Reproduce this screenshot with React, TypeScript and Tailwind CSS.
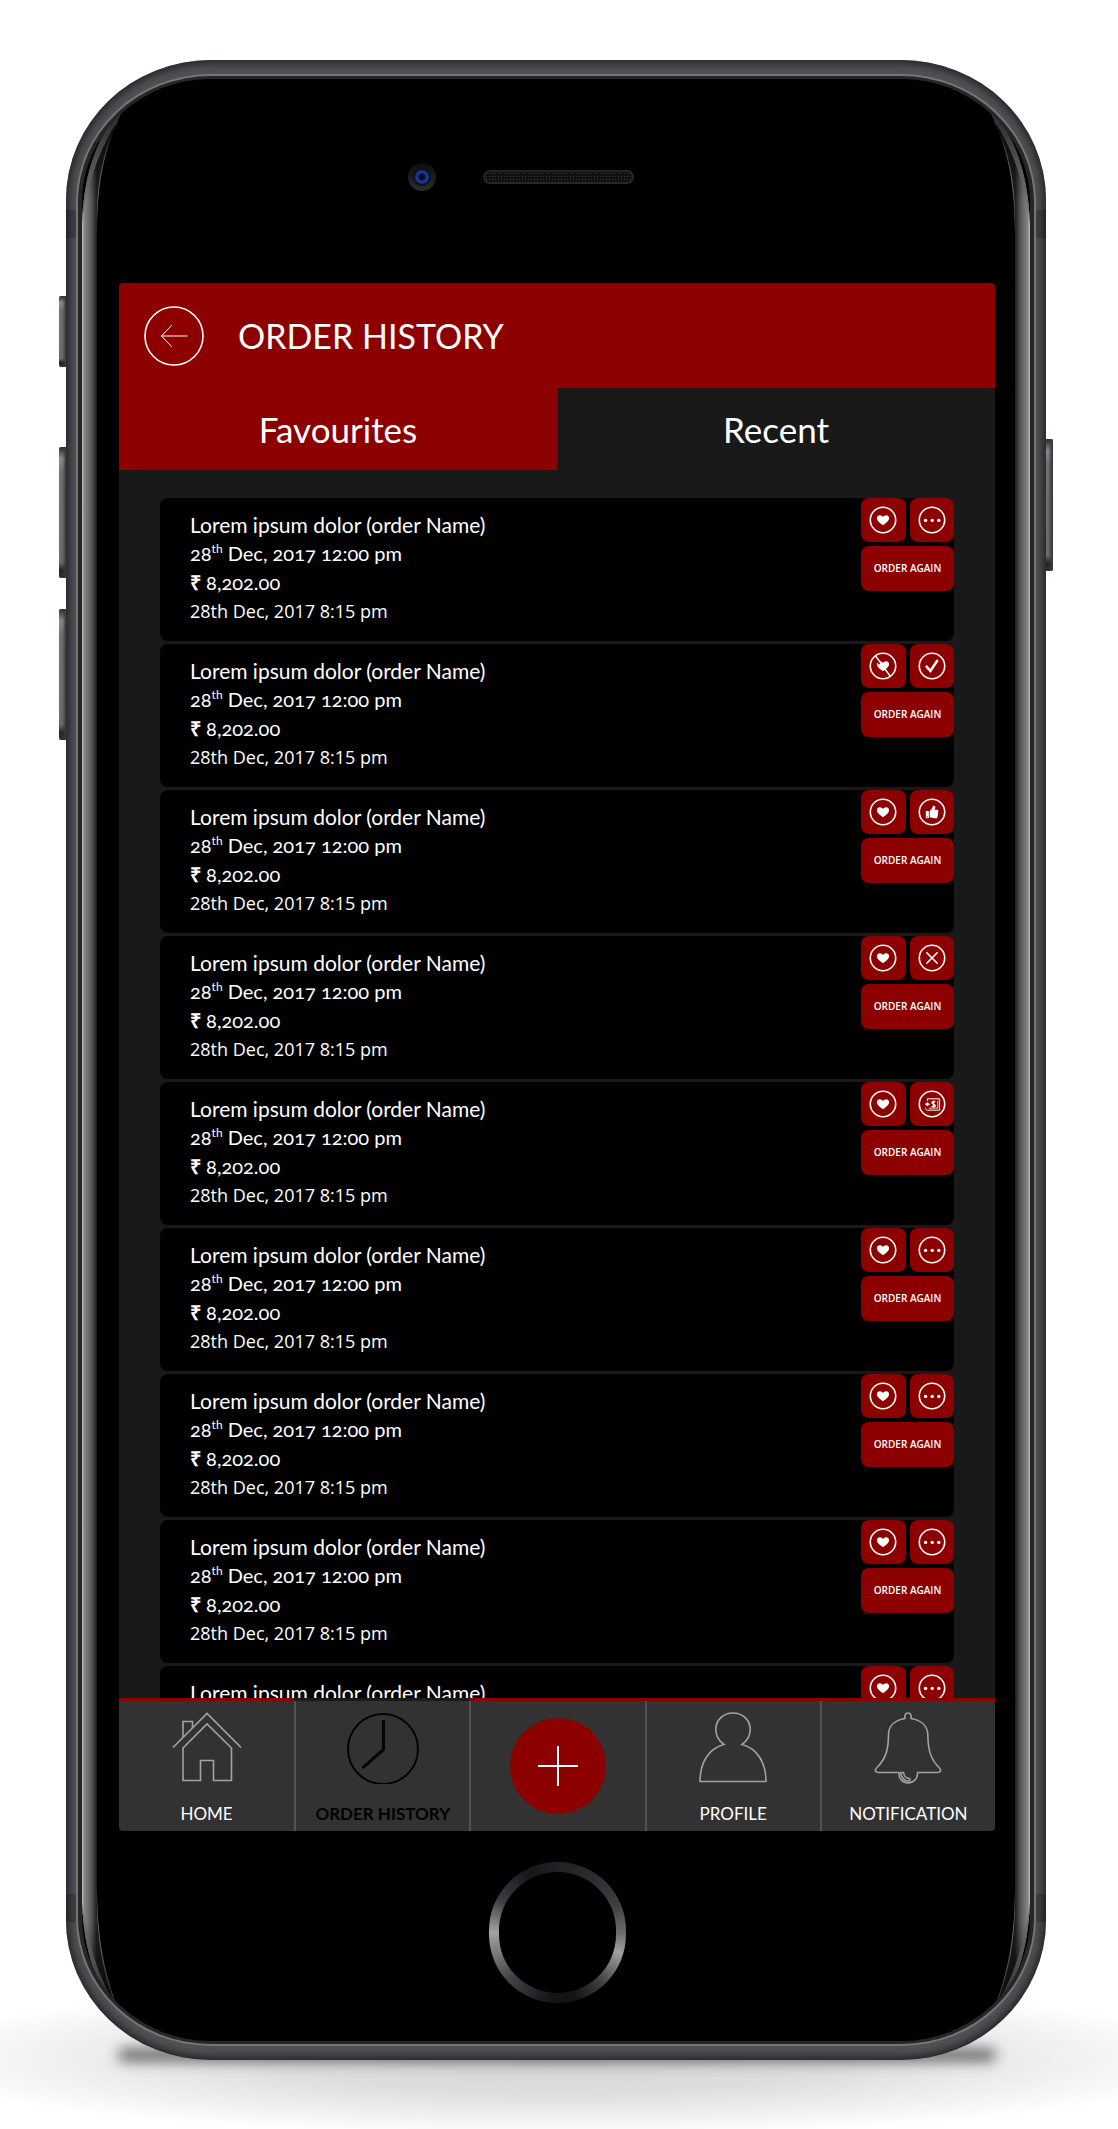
import type { ReactNode } from "react";
import { FaThumbsUp } from "react-icons/fa";

type Status = "more" | "done" | "liked" | "cancelled" | "paid";

type Order = { id: number; favourite: boolean; status: Status };

const orders: Order[] = [
  { id: 1, favourite: true, status: "more" },
  { id: 2, favourite: false, status: "done" },
  { id: 3, favourite: true, status: "liked" },
  { id: 4, favourite: true, status: "cancelled" },
  { id: 5, favourite: true, status: "paid" },
  { id: 6, favourite: true, status: "more" },
  { id: 7, favourite: true, status: "more" },
  { id: 8, favourite: true, status: "more" },
  { id: 9, favourite: true, status: "more" },
];

const statusLabels: Record<Status, string> = {
  more: "More options",
  done: "Delivered",
  liked: "Liked",
  cancelled: "Cancelled",
  paid: "Payment",
};

function RoundIcon({ children }: { children: ReactNode }) {
  return (
    <svg viewBox="0 0 28 28" className="size-7" fill="none" stroke="white" aria-hidden="true">
      <circle cx="14" cy="14" r="12.7" strokeWidth="1.6" />
      {children}
    </svg>
  );
}

function HeartIcon({ crossed }: { crossed: boolean }) {
  return (
    <RoundIcon>
      <path
        d="M14 19.2C11.5 17.2 7.9 15 7.9 12.2C7.9 10.3 9.3 9.3 10.8 9.3C12.2 9.3 13.3 10 14 11.1C14.7 10 15.8 9.3 17.2 9.3C18.7 9.3 20.1 10.3 20.1 12.2C20.1 15 16.5 17.2 14 19.2Z"
        fill="white"
        stroke="none"
      />
      {crossed && (
        <>
          <path d="M8 7.400L11 11.800M16 19.200L19 23.400" stroke="#8d0000" strokeWidth="3" />
          <path d="M6.4 3.6L21.2 24.2" strokeWidth="1.5" />
        </>
      )}
    </RoundIcon>
  );
}

function StatusIcon({ status }: { status: Status }) {
  if (status === "more") {
    return (
      <RoundIcon>
        <g fill="white" stroke="none">
          <circle cx="7.6" cy="14.4" r="1.7" />
          <circle cx="14.2" cy="14.4" r="1.7" />
          <circle cx="20.8" cy="14.4" r="1.7" />
        </g>
      </RoundIcon>
    );
  }
  if (status === "done") {
    return (
      <RoundIcon>
        <path d="M8.6 14.6L12.4 19L19.2 8.8" strokeWidth="2.5" strokeLinecap="round" />
      </RoundIcon>
    );
  }
  if (status === "liked") {
    return (
      <RoundIcon>
        <FaThumbsUp x="7.6" y="7.4" size={13} stroke="none" color="white" />
      </RoundIcon>
    );
  }
  if (status === "cancelled") {
    return (
      <RoundIcon>
        <path d="M8.8 8.8L19.2 19.2M19.2 8.8L8.8 19.2" strokeWidth="1.6" strokeLinecap="round" />
      </RoundIcon>
    );
  }
  return (
    <RoundIcon>
      <path d="M9.4 11V8.8H21.6V20.2H9.4C8.2 20.2 7.4 19 7.6 17.6" strokeWidth="1" />
      <path d="M10.8 18.2H20M19.8 10.6V18" strokeWidth="0.8" />
      <path d="M7.2 14.2L10 12.6V15.8ZM9.4 14.2H12" fill="white" strokeWidth="0.9" />
      <path
        d="M17.2 12.2C16.6 11.2 13.7 11.2 13.8 12.8C13.9 14.4 17.3 13.9 17.3 15.6C17.2 17.2 14.2 17.1 13.6 16M15.5 10.4V18"
        strokeWidth="1.3"
      />
    </RoundIcon>
  );
}

const actionClass =
  "flex h-11 items-center justify-center rounded-lg bg-[#8d0000] text-white";

function OrderCard({ order }: { order: Order }) {
  return (
    <li className="flex items-start justify-between rounded-lg bg-black">
      <div className="pt-3 pb-[15px] pl-[30px] text-xl leading-[29px] text-white oldstyle-nums">
        <h2 className="text-[21px] leading-[29px]">Lorem ipsum dolor (order Name)</h2>
        <p>
          28<sup className="top-[-8px] text-xs leading-none">th</sup> Dec, 2017 12:00 pm
        </p>
        <p>
          <span className="font-['Open_Sans'] font-bold">₹</span> 8,202.00
        </p>
        <p className="font-['Open_Sans',sans-serif] text-lg leading-[29px] lining-nums">
          28th Dec, 2017 8:15 pm
        </p>
      </div>
      <div className="grid w-[93px] grid-cols-2 gap-1">
        <button
          type="button"
          aria-label={order.favourite ? "Remove from favourites" : "Add to favourites"}
          className={actionClass}
        >
          <HeartIcon crossed={!order.favourite} />
        </button>
        <button type="button" aria-label={statusLabels[order.status]} className={actionClass}>
          <StatusIcon status={order.status} />
        </button>
        <button
          type="button"
          className="col-span-2 flex h-[45px] items-center justify-center rounded-lg bg-[#8d0000] font-['Open_Sans',sans-serif] text-[10px] font-semibold text-white"
        >
          ORDER AGAIN
        </button>
      </div>
    </li>
  );
}

function NavIcon({ children }: { children: ReactNode }) {
  return (
    <svg viewBox="0 0 72 72" className="size-[72px]" fill="none" aria-hidden="true">
      {children}
    </svg>
  );
}

function NavItem({ label, active = false, children }: { label: string; active?: boolean; children: ReactNode }) {
  return (
    <li
      className={
        active
          ? "min-w-0 flex-1 border-t-3 border-[#191919]"
          : "min-w-0 flex-1 border-t-3 border-[#8d0000]"
      }
    >
      <a
        href="#"
        aria-current={active ? "page" : undefined}
        className={
          active
            ? "flex flex-col items-center gap-[18px] border-l-2 border-[#505254] pt-[11px] pb-[5px] text-[17px] leading-6 font-bold whitespace-nowrap text-black"
            : "flex flex-col items-center gap-[18px] border-l-2 border-[#505254] pt-[11px] pb-[5px] text-[17px] leading-6 whitespace-nowrap text-white"
        }
      >
        {children}
        {label}
      </a>
    </li>
  );
}

function BottomNav() {
  return (
    <nav aria-label="Main">
      <ul className="flex overflow-hidden rounded-b bg-[#323232] [&>li:first-child>a]:border-l-0">
        <NavItem label="HOME">
          <NavIcon>
            <g stroke="#a3a3a3" strokeWidth="1.6">
              <path d="M2 35.5L36 1.5L70 35.5" />
              <path d="M12 25.5V9.5H21.5V16" />
              <path d="M12 36L36 12L60.5 36V68.5H42.5V48.5H29.5V68.5H12Z" />
            </g>
          </NavIcon>
        </NavItem>
        <NavItem label="ORDER HISTORY" active>
          <NavIcon>
            <circle cx="36" cy="37" r="35" stroke="black" strokeWidth="1.8" />
            <path d="M36.4 8V37.5L15.5 56" stroke="black" strokeWidth="3" />
          </NavIcon>
        </NavItem>
        <li className="min-w-0 flex-1 border-t-3 border-[#8d0000]">
          <div className="flex h-full items-center justify-center border-l-2 border-[#505254]">
            <button
              type="button"
              aria-label="New order"
              className="flex size-24 items-center justify-center rounded-full bg-[#8d0000]"
            >
              <svg viewBox="0 0 40 40" className="size-10" stroke="white" strokeWidth="2" aria-hidden="true">
                <path d="M20 0V40M0 20H40" />
              </svg>
            </button>
          </div>
        </li>
        <NavItem label="PROFILE">
          <NavIcon>
            <path
              d="M27 32.5C20 27.5 18.8 21 18.8 17.5C18.8 8 26.5 1 36 1C45.500 1 53.200 8 53.200 17.500C53.200 21 52 27.500 45 32.500C60 36.500 69 50 69 69.500H3C3 50 12 36.500 27 32.500Z"
              stroke="#a3a3a3"
              strokeWidth="1.6"
            />
          </NavIcon>
        </NavItem>
        <NavItem label="NOTIFICATION">
          <NavIcon>
            <g stroke="#a3a3a3" strokeWidth="1.6" strokeLinejoin="round">
              <path d="M33 6.500C32.500 3 33.500 1 36 1C38.500 1 39.500 3 39 6.500C48 8 55.500 13 55.800 22.500C56 38 58.500 47 67 55.500C70 58 68.500 60.500 65.500 60.500H45.500C46 66 42 71 36 71C30 71 26.500 66 27 60.500H6.500C3.500 60.500 2 58 5 55.500C13.500 47 16.500 38 16.500 22.500C16.500 13 24 8 33 6.500Z" />
              <path d="M28.500 60.500C29.500 66 32.500 69 36.500 69C38.500 68.500 38.500 66.500 36.500 66.300C33.500 66 32 64 31.500 60.500Z" />
            </g>
          </NavIcon>
        </NavItem>
      </ul>
    </nav>
  );
}

function Screen() {
  return (
    <main className="overflow-hidden rounded bg-[#191919] text-white">
      <header className="flex h-[105px] items-center gap-[34px] bg-[#8d0000] px-[25px]">
        <button type="button" aria-label="Back">
          <svg viewBox="0 0 60 60" className="size-[60px]" fill="none" stroke="white" aria-hidden="true">
            <circle cx="30" cy="30" r="29" strokeWidth="1.6" />
            <path d="M43.500 30H17.500M28 19L17.500 30L28 41" strokeWidth="1" />
          </svg>
        </button>
        <h1 className="text-[34px] leading-10">ORDER HISTORY</h1>
      </header>
      <div role="tablist" aria-label="Orders" className="grid h-[82px] grid-cols-2 text-[35px] leading-10">
        <button type="button" role="tab" aria-selected="true" className="bg-[#8d0000]">
          Favourites
        </button>
        <button type="button" role="tab" aria-selected="false">
          Recent
        </button>
      </div>
      <ul className="flex max-h-[1228px] flex-col gap-[3px] overflow-y-auto px-[41px] pt-7 [scrollbar-width:none]">
        {orders.map((order) => (
          <OrderCard key={order.id} order={order} />
        ))}
      </ul>
      <BottomNav />
    </main>
  );
}

/* Reflection running down one long edge of the glass. */
function EdgeGlare({ side }: { side: "left" | "right" }) {
  const id = "glare-" + side;
  return (
    <svg
      viewBox="0 0 44 1909"
      preserveAspectRatio="none"
      aria-hidden="true"
      className={
        side === "left"
          ? "absolute inset-y-6 left-0 h-[calc(100%-3rem)] w-11"
          : "absolute inset-y-6 right-0 h-[calc(100%-3rem)] w-11 -scale-x-100"
      }
    >
      <defs>
        <linearGradient id={id} gradientUnits="userSpaceOnUse" x1="0" y1="0" x2="15" y2="0">
          <stop offset="0" stopColor="#c0c0c0" />
          <stop offset="0.15" stopColor="#858585" />
          <stop offset="0.6" stopColor="#5a5a5a" />
          <stop offset="1" stopColor="#1c1c1c" />
        </linearGradient>
        <linearGradient id={id + "-tip"} gradientUnits="userSpaceOnUse" x1="0" y1="0" x2="0" y2="1909">
          <stop offset="0" stopColor="black" stopOpacity="0.7" />
          <stop offset="0.05" stopColor="black" stopOpacity="0" />
          <stop offset="0.95" stopColor="black" stopOpacity="0" />
          <stop offset="1" stopColor="black" stopOpacity="0.7" />
        </linearGradient>
      </defs>
      <path
        d="M0 120C2 75 12 35 43 2C26 35 15 70 15 130V1779C15 1835 24 1872 39 1909C12 1876 2 1840 0 1795Z"
        fill={"url(#" + id + ")"}
      />
      <path
        d="M15 130C15 70 26 35 43 2C12 35 2 75 0 120C5 80 20 40 36 18C20 50 14 80 15 130Z"
        fill="#6f6f6f"
      />
      <path
        d="M15 1779C15 1835 24 1872 39 1909C12 1876 2 1840 0 1795C5 1835 18 1872 33 1896C20 1860 14 1830 15 1779Z"
        fill="#6f6f6f"
      />
      <path
        d="M0 120C2 75 12 35 43 2C26 35 15 70 15 130V1779C15 1835 24 1872 39 1909C12 1876 2 1840 0 1795Z"
        fill={"url(#" + id + "-tip)"}
      />
    </svg>
  );
}

const sideKeyClass =
  "absolute rounded-xs bg-[linear-gradient(#2a2b2d,#8a8d90_9%,#707275_20%,#6a6c6e_88%,#232426_94%,#2f3032)] shadow-[inset_-3px_0_3px_#3a3b3d]";

export default function App() {
  return (
    <div className="relative min-h-screen overflow-hidden bg-white pt-[60px] pr-[72px] pb-[69px] pl-[66px] font-[Lato,sans-serif]">
      <div className="absolute inset-x-0 bottom-0 h-[140px] bg-[radial-gradient(ellipse_60%_55%_at_50%_50%,#d2d2d2,#dedede_45%,#f0f0f0_75%,transparent)]" />
      <div className="absolute right-[122px] bottom-[68px] left-[118px] h-3 rounded-full bg-black/60 blur-[7px]" />
      <div className="relative">
        <div className={sideKeyClass + " top-[236px] -left-[7px] h-[71px] w-2"} />
        <div className={sideKeyClass + " top-[387px] -left-[7px] h-[131px] w-2"} />
        <div className={sideKeyClass + " top-[549px] -left-[7px] h-[131px] w-2"} />
        <div className={sideKeyClass + " top-[379px] -right-[7px] h-[132px] w-2"} />

        <div className="relative rounded-[145px/140px] bg-[#505154] px-[10px] py-[14px] shadow-[inset_0_0_8px_3px_#1f2022]">
          <div className="absolute top-[150px] left-0 h-7 w-[10px] bg-black/20" />
          <div className="absolute top-[150px] right-0 h-7 w-[10px] bg-black/20" />
          <div className="absolute bottom-[138px] left-0 h-7 w-[10px] bg-black/20" />
          <div className="absolute right-0 bottom-[138px] h-7 w-[10px] bg-black/20" />
          <div className="rounded-[135px/128px] bg-[#757575] p-[2px]">
            <div className="rounded-[133px/126px] bg-[#262627] px-1 py-[3px]">
              <div className="relative overflow-hidden rounded-[129px/123px] bg-black pr-[35px] pl-[37px]">
                <EdgeGlare side="left" />
                <EdgeGlare side="right" />

                <div className="flex h-[204px] items-start justify-center pt-[84px] pl-[2px]">
                  <div className="flex size-7 items-center justify-center rounded-full bg-[linear-gradient(#0c0c0c,#2c2c2c)]">
                    <div className="size-[18px] rounded-full border-2 border-[#0a0f24] bg-[radial-gradient(circle,#04081c_20%,#1d3a9c_50%,#10205e)]" />
                  </div>
                  <div className="mt-[7px] mr-[75px] ml-[47px] h-[14px] w-[151px] rounded-full border-2 border-[#262626] bg-[#101010] bg-[radial-gradient(#3c3c3e_1px,transparent_1px)] bg-[size:3px_3px]" />
                </div>

                <Screen />

                <div className="flex h-[210px] justify-center pt-[31px]">
                  <button
                    type="button"
                    aria-label="Home button"
                    className="h-[141px] w-[137px] rounded-full bg-[conic-gradient(#1f2124,#2a2b2d_30deg,#3c3f42_65deg,#6b6b6d_90deg,#9fa1a3_108deg,#3c3d3f_140deg,#131416_165deg,#131416_185deg,#3f4144_225deg,#a2a2a3_270deg,#3a3c3f_300deg,#15171a_335deg,#1f2124)] p-[10px]"
                  >
                    <span className="block size-full rounded-full bg-black" />
                  </button>
                </div>
              </div>
            </div>
          </div>
        </div>
      </div>
    </div>
  );
}
